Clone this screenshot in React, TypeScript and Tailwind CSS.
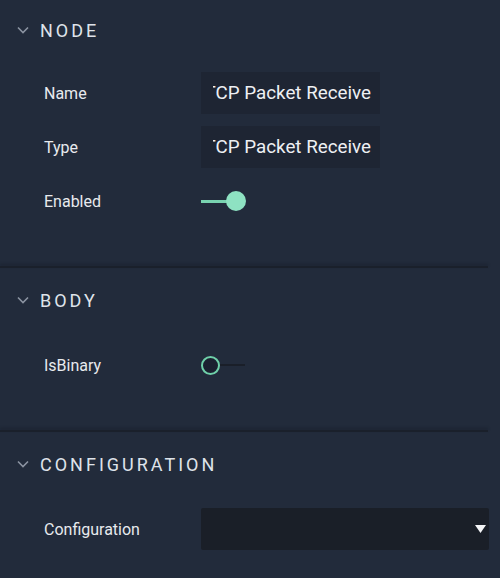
import type { ReactNode } from "react";

const font = { fontFamily: "Roboto, 'Noto Sans', sans-serif" };

function Chevron() {
  return (
    <svg width="12" height="8" viewBox="0 0 12 8" className="shrink-0">
      <path d="M1 1.5 L6 6.5 L11 1.5" fill="none" stroke="#8b93a1" strokeWidth="1.6" />
    </svg>
  );
}

function Section({
  title,
  first,
  children,
}: {
  title: string;
  first?: boolean;
  children: ReactNode;
}) {
  return (
    <section>
      <div className={`flex items-center pl-[17px] ${first ? "h-[60px]" : "h-[64px]"}`}>
        <Chevron />
        <h2 className="ml-[11px] text-[18px] tracking-[3px] text-[#dfe3ea]">{title}</h2>
      </div>
      <div className="flex flex-col gap-3 pt-3 pb-[44px]">{children}</div>
      <div className="h-[2px] w-[488px] bg-[#1a202b] shadow-[0_-2px_3px_rgba(20,25,35,0.45)]" />
    </section>
  );
}

function Row({ label, children }: { label: string; children: ReactNode }) {
  return (
    <div className="flex h-[42px] items-center">
      <div className="w-[201px] shrink-0 pl-[44px] pt-[2px] text-[16px] text-[#e8eaee]">{label}</div>
      {children}
    </div>
  );
}

function TextBox({ value }: { value: string }) {
  return (
    <div className="flex h-[42px] w-[179px] items-center bg-[#1e2533] pl-3 pr-[9px]">
      <div className="flex flex-1 justify-end overflow-hidden whitespace-nowrap text-[18.8px] text-[#eef0f3]">
        {value}
      </div>
    </div>
  );
}

function Toggle({ on }: { on: boolean }) {
  if (on) {
    return (
      <div className="flex items-center">
        <div className="h-[3px] w-[26px] bg-[#79d3b0]" />
        <div className="-ml-[1px] h-[20px] w-[20px] rounded-full bg-[#8ee2c2]" />
      </div>
    );
  }
  return (
    <div className="flex items-center">
      <div className="h-[19px] w-[19px] rounded-full border-[2.5px] border-[#6fd0a9] bg-[#1b2130]" />
      <div className="h-[2px] w-[25px] bg-[#1a1f29]" />
    </div>
  );
}

export default function App() {
  return (
    <div className="min-h-[578px] w-[500px] overflow-hidden bg-[#222b3b]" style={font}>
      <Section title="NODE" first>
        <Row label="Name">
          <TextBox value="TCP Packet Receive" />
        </Row>
        <Row label="Type">
          <TextBox value="TCP Packet Receive" />
        </Row>
        <Row label="Enabled">
          <Toggle on />
        </Row>
      </Section>
      <Section title="BODY">
        <Row label="IsBinary">
          <Toggle on={false} />
        </Row>
      </Section>
      <Section title="CONFIGURATION">
        <Row label="Configuration">
          <div className="flex h-[42px] w-[288px] items-center justify-end rounded-[2px] bg-[#1a1f28] pr-[3px]">
            <svg width="11" height="8" viewBox="0 0 11 8">
              <path d="M0 0 H11 L5.5 8 Z" fill="#f4f5f7" />
            </svg>
          </div>
        </Row>
      </Section>
    </div>
  );
}
